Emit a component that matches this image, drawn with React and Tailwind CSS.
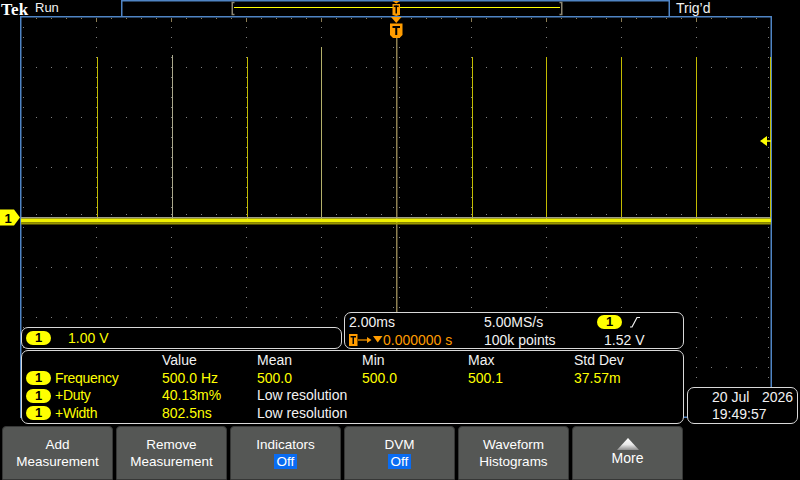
import React from 'react';

const BLUE = '#4f84c4';
const YEL = '#ffff00';
const ORANGE = '#ff9c00';

const pulses = [
  { x: 97.5, top: 57, c: '#c2bb00' },
  { x: 172.5, top: 55, c: '#a9a78a' },
  { x: 247.5, top: 57, c: '#c2bb00' },
  { x: 321.5, top: 47, c: '#b3b06a' },
  { x: 472.5, top: 57, c: '#c2bb00' },
  { x: 546.5, top: 57, c: '#c2bb00' },
  { x: 621.5, top: 57, c: '#c2bb00' },
  { x: 696.5, top: 57, c: '#c2bb00' },
  { x: 770.5, top: 57, c: '#c2bb00' },
];

const columns = ['', 'Value', 'Mean', 'Min', 'Max', 'Std Dev'];

const rows = [
  { name: 'Frequency', cells: ['500.0 Hz', '500.0', '500.0', '500.1', '37.57m'] },
  { name: '+Duty', cells: ['40.13m%'], note: 'Low resolution' },
  { name: '+Width', cells: ['802.5ns'], note: 'Low resolution' },
];

const buttons = [
  { top: 'Add', bottom: 'Measurement' },
  { top: 'Remove', bottom: 'Measurement' },
  { top: 'Indicators', off: true },
  { top: 'DVM', off: true },
  { top: 'Waveform', bottom: 'Histograms' },
  { more: true },
];

function Pill() {
  return (
    <span className="inline-flex items-center justify-center w-[25px] h-[14px] rounded-full bg-[#ffff00] text-black font-bold text-[13px] leading-[14px]">
      1
    </span>
  );
}

function dotPath(list) {
  return list.map(([x, y, h = 1]) => `M${x} ${y}h1v${h}h-1z`).join('');
}

function Graticule() {
  const dots = [];
  for (let k = 1; k < 10; k++) {
    const x = 21 + 75 * k;
    for (let y = 27; y < 417; y += 10) {
      if (k === 5) {
        dots.push([x - 3, y]);
        dots.push([x + 3, y]);
      }
      dots.push([x, y]);
    }
  }
  for (let m = 1; m < 8; m++) {
    const y = 17 + 50 * m;
    for (let x = 36; x < 771; x += 15) {
      if (m === 4) dots.push([x, y - 3]);
      dots.push([x, y]);
    }
  }
  for (let y = 27; y < 417; y += 10) {
    dots.push([23, y]);
    dots.push([768, y]);
  }
  const top = [];
  for (let x = 36; x < 771; x += 15) top.push([x, 18, (x - 21) % 75 === 0 ? 4 : 1]);

  return (
    <svg className="absolute inset-0" width="800" height="410" viewBox="0 16 800 410">
      <path d={dotPath(dots)} fill="#808080" />
      <path d={dotPath(top)} fill="#8c7d55" />
      <rect x="20.75" y="16.75" width="750.5" height="400.5" fill="none" stroke={BLUE} strokeWidth="1.5" />

      {/* trigger position line */}
      <line x1="396.75" y1="38" x2="396.75" y2="417" stroke="#8d8052" strokeWidth="1.5" />

      {pulses.map((p) => (
        <line key={p.x} x1={p.x} y1={p.top} x2={p.x} y2="219" stroke={p.c} strokeWidth="1" />
      ))}

      {/* trace */}
      <rect x="21" y="217" width="750" height="1.5" fill="#9c9c86" />
      <rect x="21" y="218.5" width="750" height="4" fill="#f0f000" />
      <rect x="21" y="222.5" width="750" height="2" fill="#9a9600" />

      {/* channel 1 marker */}
      <polygon points="0,209.5 14,209.5 20,217.5 14,225.5 0,225.5" fill={YEL} />
      <text x="8" y="222.5" textAnchor="middle" fontSize="13" fontWeight="bold" fill="#000" fontFamily="Liberation Sans, sans-serif">1</text>

      {/* trigger level */}
      <polygon points="760,141 767,136 767,146" fill={YEL} />
      <line x1="766" y1="141" x2="771" y2="141" stroke={YEL} strokeWidth="1.5" />

      {/* trigger position marker */}
      <polygon points="391,17 401.5,17 396.25,23" fill={ORANGE} />
      <path d="M390 23.5H402.5V35L399.5 38H393L390 35Z" fill={ORANGE} />
      <rect x="392.5" y="26" width="7.5" height="2" fill="#000" />
      <rect x="395.25" y="26" width="2" height="9" fill="#000" />
    </svg>
  );
}

function RecordBar() {
  return (
    <svg className="shrink-0" width="549" height="16" viewBox="121 0 549 16">
      <path d="M121.75 16V0.75H669.25V16" fill="none" stroke={BLUE} strokeWidth="1.5" />
      <line x1="234" y1="7.5" x2="560" y2="7.5" stroke={YEL} strokeWidth="1" />
      <path d="M234.5 2.5H232.25V14.5H234.5" fill="none" stroke="#8c8672" strokeWidth="1.5" />
      <path d="M559.5 2.5H561.75V14.5H559.5" fill="none" stroke="#8c8672" strokeWidth="1.5" />
      <polygon points="392.5,1 400,1 396.25,3.5" fill={ORANGE} />
      <rect x="392.5" y="4" width="7.5" height="11" fill={ORANGE} />
      <rect x="393.75" y="5.5" width="5" height="1.5" fill="#000" />
      <rect x="395.5" y="5.5" width="1.5" height="8" fill="#000" />
      <polygon points="393,15 399.5,15 396.25,16" fill={ORANGE} />
    </svg>
  );
}

function TriggerIcon() {
  return (
    <svg width="34" height="14" viewBox="0 0 34 14" className="shrink-0">
      <rect x="0" y="1" width="8.5" height="12" fill={ORANGE} />
      <rect x="1.5" y="3" width="5.5" height="1.5" fill="#000" />
      <rect x="3.5" y="3" width="1.5" height="8" fill="#000" />
      <line x1="9" y1="7" x2="21" y2="7" stroke={ORANGE} strokeWidth="1.2" />
      <polygon points="18,4 22.5,7 18,10" fill={ORANGE} />
      <polygon points="24,3 33.5,3 28.75,9.5" fill={ORANGE} />
    </svg>
  );
}

function Slope() {
  return (
    <svg width="10" height="14" viewBox="0 0 10 14" className="ml-[8px]">
      <polyline points="0,12 2,12 7,2.5 10,2.5" fill="none" stroke="#f2f2f2" strokeWidth="1.2" />
    </svg>
  );
}

function MoreArrow() {
  return (
    <svg width="22" height="12" viewBox="0 0 22 12">
      <defs>
        <linearGradient id="moreGrad" x1="0" y1="0" x2="0" y2="1">
          <stop offset="0" stopColor="#ffffff" />
          <stop offset="0.55" stopColor="#e8e8e8" />
          <stop offset="1" stopColor="#8e8e8e" />
        </linearGradient>
      </defs>
      <polygon points="11,0 22,12 0,12" fill="url(#moreGrad)" />
    </svg>
  );
}

export default function App() {
  return (
    <div className="w-[800px] h-[480px] bg-black flex flex-col overflow-hidden text-[14px] text-[#f2f2f2] font-['Liberation_Sans',Arial,sans-serif]">
      {/* Status bar */}
      <header className="h-[16px] flex shrink-0">
        <span className="w-[35px] pl-[1px] font-['Liberation_Serif',serif] font-bold text-[17px] leading-[19px] tracking-[0.2px] text-white">
          Tek
        </span>
        <span className="w-[86px] text-[13px] leading-[16px]">Run</span>
        <RecordBar />
        <span className="ml-[6px] leading-[16px]">Trig&#8217;d</span>
      </header>

      {/* Waveform display */}
      <div className="relative h-[410px] shrink-0">
        <Graticule />

        <div className="absolute left-[21px] bottom-[2px] flex items-end">
          <div className="w-[663px] flex flex-col gap-[1px]">
            <div className="flex items-end gap-[2px]">
              {/* vertical scale */}
              <div className="w-[321px] h-[22px] rounded-[7px] border border-[#d9d9d9] bg-black flex items-center pl-[4px]">
                <Pill />
                <span className="ml-[17px] text-[#ffff00] leading-[20px]">1.00 V</span>
              </div>

              {/* horizontal / trigger */}
              <div className="w-[340px] h-[37px] rounded-[7px] border border-[#d9d9d9] bg-black pl-[4px] grid grid-cols-[135px_113px_1fr] leading-[18px]">
                <span>2.00ms</span>
                <span>5.00MS/s</span>
                <span className="flex items-center">
                  <Pill />
                  <Slope />
                </span>
                <span className="flex items-center text-[#ff9c00]">
                  <TriggerIcon />
                  <span>0.000000 s</span>
                </span>
                <span>100k points</span>
                <span className="pl-[7px]">1.52 V</span>
              </div>
            </div>

            {/* measurements */}
            <div className="h-[74px] rounded-[7px] border border-[#d9d9d9] bg-black pt-[1px] pl-[4px] grid grid-cols-[136px_95px_105px_106px_106px_1fr] auto-rows-[17.5px] leading-[17.5px]">
              {columns.map((c, i) => (
                <span key={i}>{c}</span>
              ))}
              {rows.map((r) => (
                <React.Fragment key={r.name}>
                  <span className="flex items-center gap-[4px] text-[#ffff00]">
                    <Pill />
                    <span className="tracking-[-0.3px]">{r.name}</span>
                  </span>
                  {r.cells.map((v, i) => (
                    <span key={i} className="text-[#ffff00]">{v}</span>
                  ))}
                  {r.note && <span className="col-span-4">{r.note}</span>}
                </React.Fragment>
              ))}
            </div>
          </div>

          {/* date / time */}
          <div className="ml-[3px] w-[111px] h-[37px] rounded-[7px] border border-[#d9d9d9] bg-black pl-[24px] pt-[1px] leading-[16.5px]">
            <div className="flex">
              <span className="w-[50px]">20 Jul</span>
              <span>2026</span>
            </div>
            <div>19:49:57</div>
          </div>
        </div>
      </div>

      {/* Soft keys */}
      <nav className="h-[54px] flex gap-[3px] pl-[2px] shrink-0">
        {buttons.map((b, i) => (
          <div
            key={i}
            className="w-[111px] bg-[#555755] border border-[#363736] rounded-t-[4px] flex flex-col items-center text-[13.5px] leading-[17px] text-white"
          >
            {b.more ? (
              <>
                <div className="pt-[11px]">
                  <MoreArrow />
                </div>
                <span className="text-[14px]">More</span>
              </>
            ) : (
              <>
                <span className="pt-[9px]">{b.top}</span>
                {b.off ? (
                  <span className="mt-[1px] bg-[#0a6cf2] px-[3px] leading-[15px]">Off</span>
                ) : (
                  <span>{b.bottom}</span>
                )}
              </>
            )}
          </div>
        ))}
      </nav>
    </div>
  );
}
